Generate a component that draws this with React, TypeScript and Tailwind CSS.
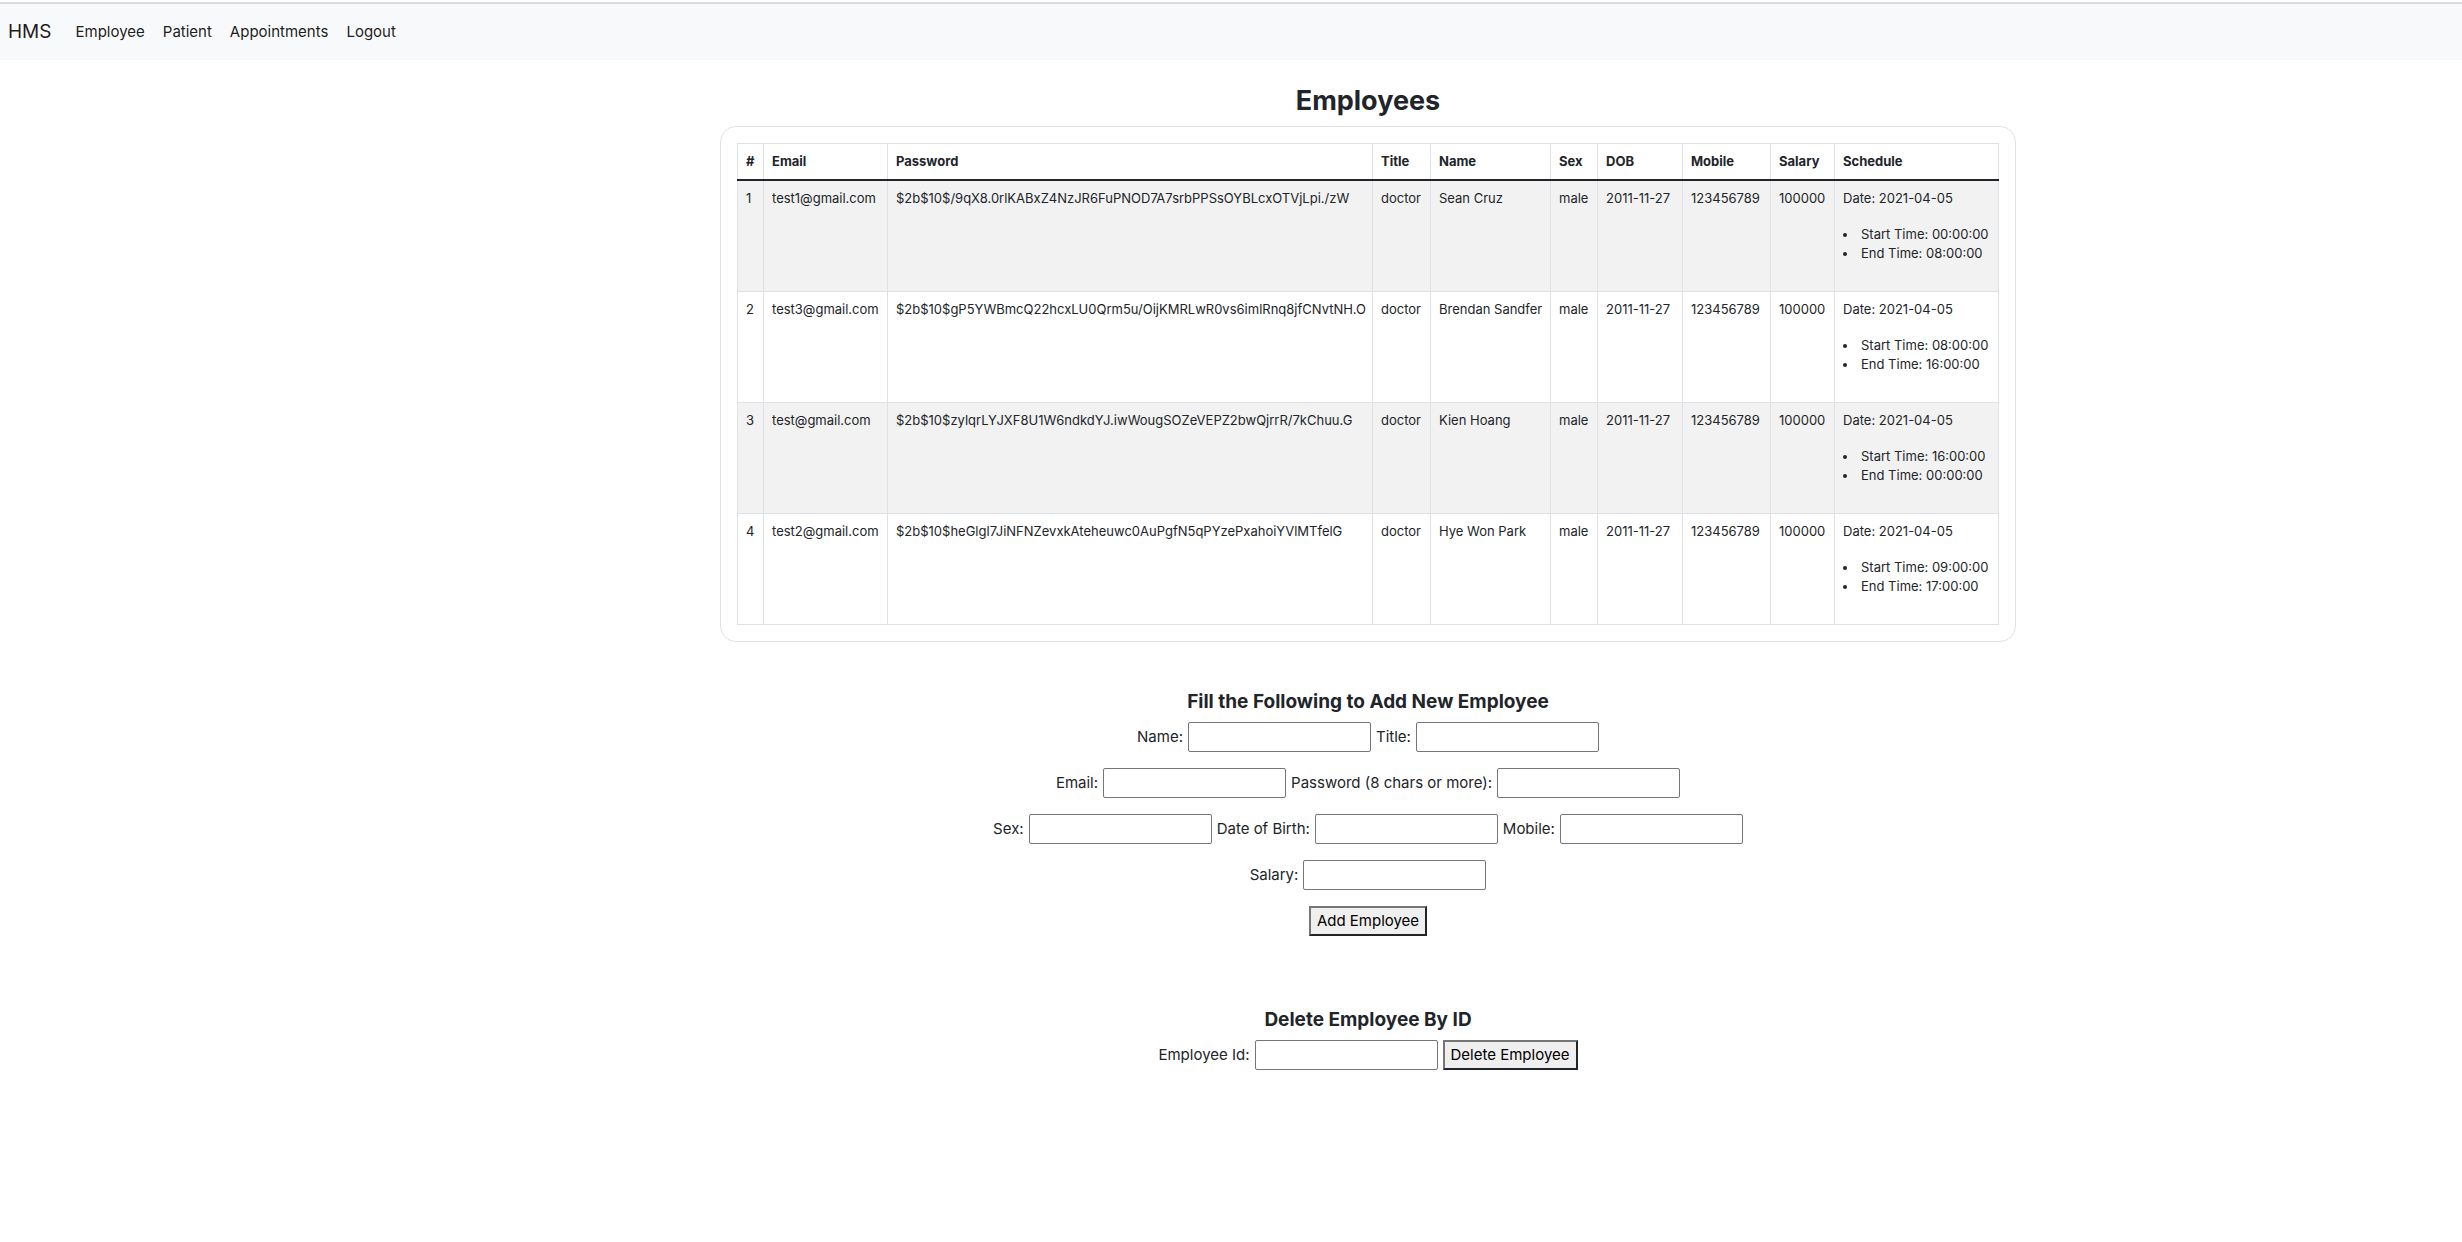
type Employee = {
  id: number;
  email: string;
  password: string;
  name: string;
  start: string;
  end: string;
};

const employees: Employee[] = [
  { id: 1, email: "test1@gmail.com", password: "$2b$10$/9qX8.0rlKABxZ4NzJR6FuPNOD7A7srbPPSsOYBLcxOTVjLpi./zW", name: "Sean Cruz", start: "00:00:00", end: "08:00:00" },
  { id: 2, email: "test3@gmail.com", password: "$2b$10$gP5YWBmcQ22hcxLU0Qrm5u/OijKMRLwR0vs6imlRnq8jfCNvtNH.O", name: "Brendan Sandfer", start: "08:00:00", end: "16:00:00" },
  { id: 3, email: "test@gmail.com", password: "$2b$10$zylqrLYJXF8U1W6ndkdYJ.iwWougSOZeVEPZ2bwQjrrR/7kChuu.G", name: "Kien Hoang", start: "16:00:00", end: "00:00:00" },
  { id: 4, email: "test2@gmail.com", password: "$2b$10$heGlgl7JiNFNZevxkAteheuwc0AuPgfN5qPYzePxahoiYVlMTfelG", name: "Hye Won Park", start: "09:00:00", end: "17:00:00" },
];

const columns = [
  { label: "#", width: "w-[26px]" },
  { label: "Email", width: "w-[124px]" },
  { label: "Password", width: "w-[485px]" },
  { label: "Title", width: "w-[58px]" },
  { label: "Name", width: "w-[120px]" },
  { label: "Sex", width: "w-[47px]" },
  { label: "DOB", width: "w-[85px]" },
  { label: "Mobile", width: "w-[88px]" },
  { label: "Salary", width: "w-[64px]" },
  { label: "Schedule", width: "w-[164px]" },
];

const formRows = [
  [{ id: "name", label: "Name:" }, { id: "title", label: "Title:" }],
  [{ id: "email", label: "Email:" }, { id: "password", label: "Password (8 chars or more):" }],
  [{ id: "sex", label: "Sex:" }, { id: "dob", label: "Date of Birth:" }, { id: "mobile", label: "Mobile:" }],
  [{ id: "salary", label: "Salary:" }],
];

function Field({ id, label }: { id: string; label: string }) {
  return (
    <>
      <label htmlFor={id}>{label}</label>
      <input
        id={id}
        type="text"
        className="h-[30px] w-[183px] rounded-xs border border-[#767676] bg-white px-0.5"
      />
    </>
  );
}

function ActionButton({ children }: { children: string }) {
  return (
    <button
      type="button"
      className="h-[30px] border-2 border-t-[#767676] border-r-[#212529] border-b-[#212529] border-l-[#767676] bg-[#efefef] px-1.5 leading-6 text-black"
    >
      {children}
    </button>
  );
}

export default function App() {
  return (
    <div className="min-h-screen bg-white pt-0.5 font-['Inter',sans-serif] text-[15px] leading-6 text-[#212529]">
      <nav className="flex items-center border-t-2 border-[#dadce0] bg-[#f8f9fa] px-2 py-2 text-black/90">
        <a href="#home" className="mr-4 py-[5px] text-[19px] leading-[30px]">HMS</a>
        <div className="flex gap-0.5">
          {["Employee", "Patient", "Appointments", "Logout"].map((item) => (
            <a key={item} href={"#" + item.toLowerCase()} className="p-2">{item}</a>
          ))}
        </div>
      </nav>

      <main className="pt-6 pl-[274px]">
        <div className="mx-auto max-w-[1296px]">
          <h1 className="mb-2 text-center text-[27px] leading-[34px] font-bold">Employees</h1>

          <div className="rounded-2xl border border-[#dee2e6] p-4">
            <table className="w-full table-fixed border-collapse text-left text-[13px] leading-[19px] whitespace-nowrap">
              <thead>
                <tr className="border-b-2 border-[#212529]">
                  {columns.map((c) => (
                    <th key={c.label} scope="col" className={"border-x border-t border-x-[#dee2e6] border-t-[#dee2e6] p-2 font-bold " + c.width}>
                      {c.label}
                    </th>
                  ))}
                </tr>
              </thead>
              <tbody>
                {employees.map((e) => (
                  <tr key={e.id} className="align-top odd:bg-[#f2f2f2] [&>td]:border-x [&>td]:border-b [&>td]:border-[#dee2e6] [&>td]:p-2">
                    <td>{e.id}</td>
                    <td>{e.email}</td>
                    <td>{e.password}</td>
                    <td>doctor</td>
                    <td>{e.name}</td>
                    <td>male</td>
                    <td>2011-11-27</td>
                    <td>123456789</td>
                    <td>100000</td>
                    <td>
                      Date: 2021-04-05
                      <ul className="mt-[17px] mb-5 list-inside list-disc">
                        <li>Start Time: {e.start}</li>
                        <li>End Time: {e.end}</li>
                      </ul>
                    </td>
                  </tr>
                ))}
              </tbody>
            </table>
          </div>

          <form className="mt-12 flex flex-col items-center">
            <h2 className="mb-2 text-[19px] leading-6 font-bold">Fill the Following to Add New Employee</h2>
            <div className="flex flex-col items-center gap-4">
              {formRows.map((row) => (
                <div key={row[0].id} className="flex items-center gap-[5px]">
                  {row.map((f) => (
                    <Field key={f.id} id={f.id} label={f.label} />
                  ))}
                </div>
              ))}
              <ActionButton>Add Employee</ActionButton>
            </div>
          </form>

          <form className="mt-[72px] flex flex-col items-center">
            <h2 className="mb-2 text-[19px] leading-6 font-bold">Delete Employee By ID</h2>
            <div className="flex items-center gap-[5px]">
              <Field id="employee-id" label="Employee Id:" />
              <ActionButton>Delete Employee</ActionButton>
            </div>
          </form>
        </div>
      </main>
    </div>
  );
}
